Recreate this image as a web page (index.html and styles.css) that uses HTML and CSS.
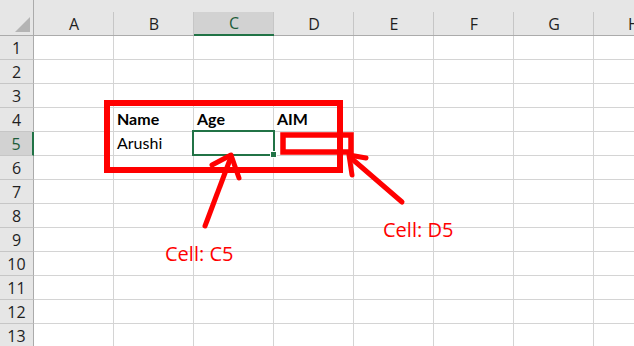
FILE: index.html
```html
<!DOCTYPE html>
<html>
<head>
<meta charset="utf-8">
<link rel="stylesheet" href="styles.css">
</head>
<body>
<div class="sheet">
  <div class="corner"><span class="tri"></span></div>
  <div class="ch">A</div><div class="ch">B</div><div class="ch ch-sel">C</div><div class="ch">D</div><div class="ch">E</div><div class="ch">F</div><div class="ch">G</div><div class="ch">H</div>

  <div class="rh">1</div><div class="c"></div><div class="c"></div><div class="c"></div><div class="c"></div><div class="c"></div><div class="c"></div><div class="c"></div><div class="c"></div>
  <div class="rh">2</div><div class="c"></div><div class="c"></div><div class="c"></div><div class="c"></div><div class="c"></div><div class="c"></div><div class="c"></div><div class="c"></div>
  <div class="rh">3</div><div class="c"></div><div class="c"></div><div class="c"></div><div class="c"></div><div class="c"></div><div class="c"></div><div class="c"></div><div class="c"></div>
  <div class="rh">4</div><div class="c"></div><div class="c b">Name</div><div class="c b">Age</div><div class="c b">AIM</div><div class="c"></div><div class="c"></div><div class="c"></div><div class="c"></div>
  <div class="rh rh-sel">5</div><div class="c"></div><div class="c">Arushi</div><div class="c sel"><span class="handle"></span></div><div class="c"></div><div class="c"></div><div class="c"></div><div class="c"></div><div class="c"></div>
  <div class="rh">6</div><div class="c"></div><div class="c"></div><div class="c"></div><div class="c"></div><div class="c"></div><div class="c"></div><div class="c"></div><div class="c"></div>
  <div class="rh">7</div><div class="c"></div><div class="c"></div><div class="c"></div><div class="c"></div><div class="c"></div><div class="c"></div><div class="c"></div><div class="c"></div>
  <div class="rh">8</div><div class="c"></div><div class="c"></div><div class="c"></div><div class="c"></div><div class="c"></div><div class="c"></div><div class="c"></div><div class="c"></div>
  <div class="rh">9</div><div class="c"></div><div class="c"></div><div class="c"></div><div class="c"></div><div class="c"></div><div class="c"></div><div class="c"></div><div class="c"></div>
  <div class="rh">10</div><div class="c"></div><div class="c"></div><div class="c"></div><div class="c"></div><div class="c"></div><div class="c"></div><div class="c"></div><div class="c"></div>
  <div class="rh">11</div><div class="c"></div><div class="c"></div><div class="c"></div><div class="c"></div><div class="c"></div><div class="c"></div><div class="c"></div><div class="c"></div>
  <div class="rh">12</div><div class="c"></div><div class="c"></div><div class="c"></div><div class="c"></div><div class="c"></div><div class="c"></div><div class="c"></div><div class="c"></div>
  <div class="rh">13</div><div class="c"></div><div class="c"></div><div class="c"></div><div class="c"></div><div class="c"></div><div class="c"></div><div class="c"></div><div class="c"></div>
</div>

<svg class="notes" width="634" height="346" viewBox="0 0 634 346">
  <g fill="none" stroke="#ff0000" stroke-linecap="round" stroke-linejoin="round">
    <rect x="107" y="103" width="233" height="67" stroke-width="6" stroke-linecap="butt" stroke-linejoin="miter"/>
    <rect x="283" y="135" width="68" height="17" stroke-width="5.5" stroke-linecap="butt" stroke-linejoin="miter"/>
    <path d="M205 226 L231 157" stroke-width="5"/>
    <path d="M212 165 L231 155 L239 178" stroke-width="5"/>
    <path d="M402 202 L351 158" stroke-width="5"/>
    <path d="M366 158 L349 155 L352 175" stroke-width="5"/>
  </g>
  <text class="label" x="165" y="261">Cell: C5</text>
  <text class="label" x="383" y="237">Cell: D5</text>
</svg>
</body>
</html>
```

FILE: styles.css
```css
html, body {
  margin: 0;
  padding: 0;
  background: #ffffff;
  overflow: hidden;
  width: 634px;
  height: 346px;
}

.sheet {
  display: grid;
  grid-template-columns: 34px repeat(8, 80px);
  grid-template-rows: 36px repeat(13, 24px);
  width: 674px;
}

.corner {
  background: #e6e6e6;
  border-right: 1px solid #ababab;
  border-bottom: 1px solid #ababab;
  box-sizing: border-box;
  position: relative;
}

.tri {
  position: absolute;
  left: 15px;
  top: 17px;
  width: 0;
  height: 0;
  border-left: 15px solid transparent;
  border-bottom: 15px solid #b4b4b4;
}

.ch {
  background: #e6e6e6;
  box-sizing: border-box;
  border-bottom: 1px solid #ababab;
  padding-top: 12px;
  display: flex;
  align-items: center;
  justify-content: center;
  font-family: "Open Sans", "Noto Sans", sans-serif;
  font-size: 16px;
  color: #1f1f1f;
  position: relative;
}

.ch::after {
  content: "";
  position: absolute;
  right: 0;
  top: 12px;
  bottom: 0;
  width: 1px;
  background: #c6c6c6;
}

.ch-sel {
  background: linear-gradient(#e6e6e6 12px, #d2d2d2 12px);
  border-bottom: 2px solid #217346;
  color: #1d5c3a;
}

.rh {
  background: #e6e6e6;
  box-sizing: border-box;
  border-right: 1px solid #ababab;
  border-bottom: 1px solid #c6c6c6;
  display: flex;
  align-items: center;
  justify-content: center;
  font-family: "Open Sans", "Noto Sans", sans-serif;
  font-size: 16px;
  color: #1f1f1f;
  padding-top: 1px;
}

.rh-sel {
  background: #d2d2d2;
  border-right: 2px solid #217346;
  color: #1d5c3a;
}

.c {
  box-sizing: border-box;
  border-right: 1px solid #d4d4d4;
  border-bottom: 1px solid #d4d4d4;
  display: flex;
  align-items: flex-end;
  padding: 0 0 3px 3px;
  font-family: Lato, "Open Sans", sans-serif;
  font-size: 16px;
  color: #000000;
  line-height: 18px;
}

.b {
  font-weight: bold;
}

.sel {
  position: relative;
}

.sel::before {
  content: "";
  position: absolute;
  left: -2px;
  top: -2px;
  right: -2px;
  bottom: -1px;
  border: 2px solid #217346;
}

.handle {
  position: absolute;
  right: -4px;
  bottom: -3px;
  width: 5px;
  height: 5px;
  background: #217346;
  border: 1px solid #ffffff;
}

.notes {
  position: absolute;
  left: 0;
  top: 0;
}

.label {
  font-family: "Open Sans", "Noto Sans", sans-serif;
  font-size: 20px;
  fill: #ff0000;
}
```
